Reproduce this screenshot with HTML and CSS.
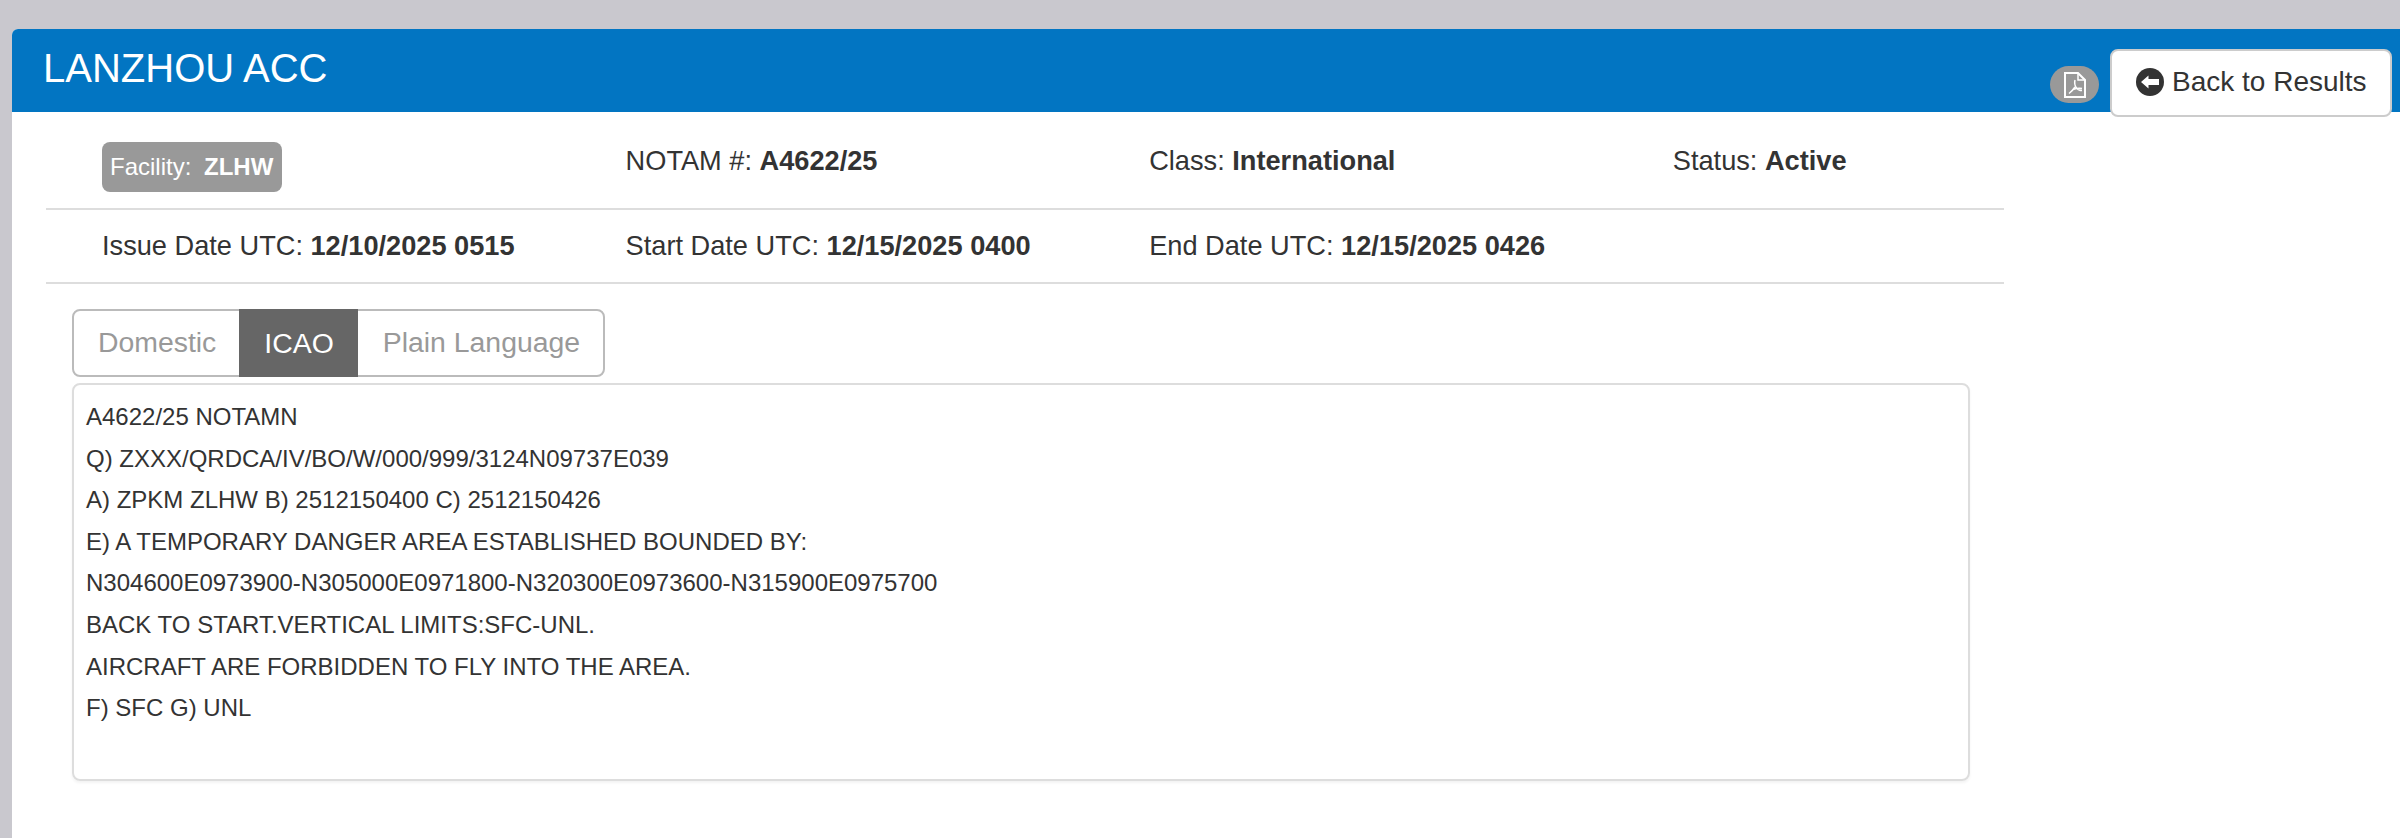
FILE: index.html
```html
<!DOCTYPE html>
<html lang="en">
<head>
  <meta charset="UTF-8" />
  <title>NOTAM Details</title>
  <link rel="stylesheet" href="styles.css">
</head>
<body>
  <div class="panel">
    <div class="panel-heading">LANZHOU ACC</div>

    <div class="panel-actions">
      <a class="pdf-btn" href="#">
        <svg class="pdf-icon" viewBox="0 0 22 26" aria-hidden="true">
          <path class="pdf-outline" d="M1 1h13l7 7v17H1z" />
          <path class="pdf-fold" d="M14 1v7h7" />
          <path class="pdf-mark" d="M11 8c-1 4 0 6 1.500 8s3.500 2.500 5.500 2.500M11 15c-2 3-4 5-6 6.500M9 17.500c3-1 6-1.500 9-1" />
        </svg>
      </a>
      <a class="back-btn" href="#">
        <svg class="back-icon" viewBox="0 0 28 28" aria-hidden="true">
          <circle class="back-disc" cx="14" cy="14" r="14" />
          <path class="back-arrow" d="M5 14l7.500-6.500V11H23v6H12.500v3.500z" />
        </svg>
        Back to Results
      </a>
    </div>

    <div class="info-row">
      <div class="info-col"><span class="facility-badge">Facility: <b>ZLHW</b></span></div>
      <div class="info-col">NOTAM #: <b>A4622/25</b></div>
      <div class="info-col">Class: <b>International</b></div>
      <div class="info-col">Status: <b>Active</b></div>
    </div>
    <div class="info-row info-row-dates">
      <div class="info-col">Issue Date UTC: <b>12/10/2025 0515</b></div>
      <div class="info-col">Start Date UTC: <b>12/15/2025 0400</b></div>
      <div class="info-col">End Date UTC: <b>12/15/2025 0426</b></div>
      <div class="info-col"></div>
    </div>

    <div class="notam-body">
      <div class="tabs">
        <a class="tab" href="#">Domestic</a>
        <a class="tab active" href="#">ICAO</a>
        <a class="tab" href="#">Plain Language</a>
      </div>
      <div class="notam-text">
        <p>A4622/25 NOTAMN</p>
        <p>Q) ZXXX/QRDCA/IV/BO/W/000/999/3124N09737E039</p>
        <p>A) ZPKM ZLHW B) 2512150400 C) 2512150426</p>
        <p>E) A TEMPORARY DANGER AREA ESTABLISHED BOUNDED BY:</p>
        <p>N304600E0973900-N305000E0971800-N320300E0973600-N315900E0975700</p>
        <p>BACK TO START.VERTICAL LIMITS:SFC-UNL.</p>
        <p>AIRCRAFT ARE FORBIDDEN TO FLY INTO THE AREA.</p>
        <p>F) SFC G) UNL</p>
      </div>
    </div>
  </div>
</body>
</html>
```

FILE: styles.css
```css
html, body {
  margin: 0;
  padding: 0;
  height: 100%;
  overflow: hidden;
  background: #c9c8ce;
  font-family: "Liberation Sans", Arial, sans-serif;
  color: #333;
}

body {
  padding: 29px 0 0 12px;
  box-sizing: border-box;
}

.panel {
  position: relative;
  height: 100%;
  background: #fff;
  border-top-left-radius: 6px;
}

.panel-heading {
  height: 83px;
  box-sizing: border-box;
  padding: 17px 31px 0;
  background: #0275c2;
  border-top-left-radius: 6px;
  color: #fff;
  font-size: 40px;
  line-height: 45px;
}

.panel-actions {
  position: absolute;
  top: 20px;
  right: 8px;
  display: flex;
  align-items: flex-start;
  gap: 11px;
}

.pdf-btn {
  display: flex;
  align-items: center;
  justify-content: center;
  width: 49px;
  height: 37px;
  margin-top: 17px;
  background: #999;
  border-radius: 19px;
}

.pdf-icon {
  width: 22px;
  height: 26px;
}

.pdf-outline,
.pdf-fold,
.pdf-mark {
  fill: none;
  stroke: #fff;
}

.pdf-outline {
  stroke-width: 2;
}

.pdf-fold,
.pdf-mark {
  stroke-width: 1.500;
}

.back-btn {
  display: flex;
  align-items: center;
  gap: 8px;
  width: 282px;
  height: 68px;
  box-sizing: border-box;
  padding: 0 0 2px 24px;
  background: #fff;
  border: 2px solid #ccc;
  border-radius: 8px;
  color: #333;
  font-size: 28px;
  text-decoration: none;
}

.back-icon {
  width: 28px;
  height: 28px;
}

.back-disc {
  fill: #333;
}

.back-arrow {
  fill: #fff;
}

.info-row {
  display: flex;
  height: 98px;
  box-sizing: border-box;
  margin: 0 0 0 34px;
  width: 1958px;
  padding: 2px 0 0 56px;
  border-bottom: 2px solid #ddd;
  align-items: center;
  font-size: 27.200px;
}

.info-row-dates {
  height: 74px;
  padding: 0 0 1px 56px;
}

.info-col {
  width: 523.600px;
  flex: none;
}

.facility-badge {
  display: inline-block;
  margin-top: 12px;
  padding: 12px 9px 12px 8px;
  background: #999;
  border-radius: 8px;
  color: #fff;
  font-size: 24px;
  line-height: 26px;
}

.facility-badge b {
  margin-left: 6px;
}

.notam-body {
  padding: 25px 0 0 60px;
  width: 1898px;
}

.tabs {
  display: inline-flex;
  vertical-align: top;
  height: 68px;
  box-sizing: border-box;
  border: 2px solid #bbb;
  border-radius: 8px;
  font-size: 28.400px;
}

.tab {
  display: flex;
  align-items: center;
  padding: 0 23px 2px 24px;
  color: #999;
  text-decoration: none;
}

.tab.active {
  margin: -2px 0;
  padding: 0 24px 0 25px;
  background: #666;
  color: #fff;
}

.tab:last-child {
  padding: 0 23px 2px 25px;
}

.notam-text {
  height: 398px;
  box-sizing: border-box;
  margin-top: 6px;
  padding: 11px 12px 0;
  border: 2px solid #ddd;
  border-radius: 8px;
  box-shadow: 0 2px 3px rgba(0, 0, 0, 0.05);
  font-size: 24px;
  line-height: 41.600px;
}

.notam-text p {
  margin: 0;
}
```
